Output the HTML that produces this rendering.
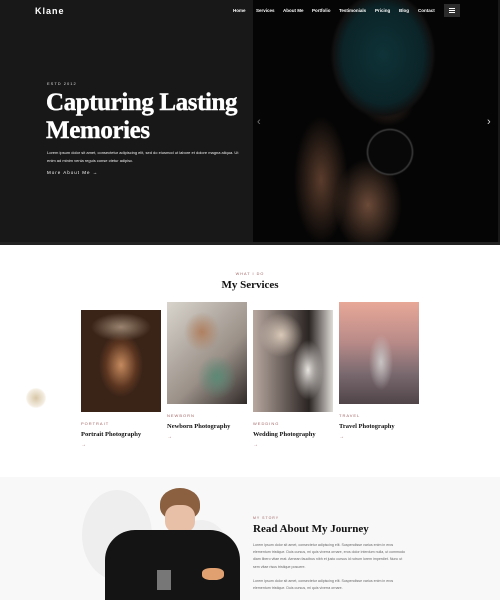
<!DOCTYPE html>
<html><head><meta charset="utf-8"><style>
*{margin:0;padding:0;box-sizing:border-box}
body{width:500px;height:600px;overflow:hidden;font-family:"Liberation Sans",sans-serif;background:#fff;position:relative}
.a{position:absolute}
.hero{left:0;top:0;width:500px;height:245px;background:#181818}
.photo{left:253px;top:0;width:245px;height:242px;background:radial-gradient(circle 28px at 137px 152px,#080808 0 75%,#3a3a3a 80%,transparent 86%),radial-gradient(ellipse 62px 75px at 130px 55px,#0e3338 0%,#0b2428 65%,#101010 80%,transparent 85%),radial-gradient(ellipse 32px 75px at 68px 180px,#5a3c2c,transparent 85%),radial-gradient(ellipse 40px 55px at 115px 205px,#6b4a38,transparent 85%),radial-gradient(ellipse 30px 25px at 135px 105px,#3a2a22,transparent 85%),#050505}
.nav{top:8px;font-size:4.5px;color:#fff;font-weight:bold}
.serif{font-family:"Liberation Serif",serif;font-weight:bold}
.card{width:80px}
.lbl{font-size:4px;letter-spacing:1px;color:#a06060}
.t{font-size:6.5px;color:#111}
.p{font-size:3.6px;color:#666;line-height:7.2px;width:155px}
</style></head><body>
<div class="a hero"></div>
<div class="a photo"></div>
<div class="a" style="left:0;top:242px;width:500px;height:3px;background:#222"></div>
<div class="a" style="left:35px;top:6px;color:#fff;font-weight:bold;font-size:9px;letter-spacing:1px">Klane</div>
<div class="a nav" style="left:233px">Home</div>
<div class="a nav" style="left:256px">Services</div>
<div class="a nav" style="left:283px">About Me</div>
<div class="a nav" style="left:312px">Portfolio</div>
<div class="a nav" style="left:339px">Testimonials</div>
<div class="a nav" style="left:375px">Pricing</div>
<div class="a nav" style="left:399px">Blog</div>
<div class="a nav" style="left:418px">Contact</div>
<div class="a" style="left:444px;top:4px;width:16px;height:13px;background:#2c2c2c"></div>
<div class="a" style="left:449px;top:8px;width:6px;height:1px;background:#fff;box-shadow:0 2px #fff,0 4px #fff"></div>
<div class="a" style="left:47px;top:81px;color:#ddd;font-size:4px;letter-spacing:1px">ESTD 2012</div>
<div class="a serif" style="left:46px;top:89px;color:#fff;font-size:25px;line-height:28px;letter-spacing:-0.4px;-webkit-text-stroke:0.4px #fff">Capturing Lasting<br>Memories</div>
<div class="a" style="left:47px;top:149px;color:#eee;font-size:4px;line-height:7.5px;width:195px">Lorem ipsum dolor sit amet, consectetur adipiscing elit, sed do eiusmod ut labore et dolore magna aliqua. Ut enim ad minim venia reguis conse ctetur adipisc.</div>
<div class="a" style="left:47px;top:170px;color:#fff;font-size:4.5px;letter-spacing:1px">More About Me →</div>
<div class="a" style="left:257px;top:116px;color:#777;font-size:11px">‹</div>
<div class="a" style="left:487px;top:116px;color:#ddd;font-size:11px">›</div>
<div class="a" style="left:0;top:272px;width:500px;text-align:center;font-size:3.8px;letter-spacing:1px;color:#a06060">WHAT I DO</div>
<div class="a serif" style="left:0;top:279px;width:500px;text-align:center;font-size:11px;color:#111">My Services</div>
<div class="a" style="left:26px;top:388px;width:20px;height:20px;border-radius:50%;background:radial-gradient(circle,#d8c7a8,#f3ece0 60%,#fff 75%)"></div>
<div class="a card" style="left:81px;top:310px;height:102px;background:radial-gradient(ellipse 30px 14px at 40px 17px,#9a8470,transparent),radial-gradient(ellipse 22px 32px at 40px 55px,#c58a5e,#5b3520 70%,#3a2418)"></div>
<div class="a card" style="left:167px;top:302px;height:102px;background:radial-gradient(ellipse 20px 22px at 50px 75px,#5c8a76,transparent),radial-gradient(ellipse 18px 20px at 35px 30px,#b08060,transparent),linear-gradient(135deg,#d8d4cc,#9a9088 60%,#302a28)"></div>
<div class="a card" style="left:253px;top:310px;height:102px;background:radial-gradient(ellipse 15px 30px at 55px 60px,#e8e4e0,transparent),radial-gradient(ellipse 22px 22px at 28px 25px,#d8c8b8,transparent),linear-gradient(90deg,#b8a8a0,#2a2422 70%,#e0dcd8)"></div>
<div class="a card" style="left:339px;top:302px;height:102px;background:radial-gradient(ellipse 12px 28px at 42px 60px,#c8c4c4,transparent),linear-gradient(180deg,#e8a898,#b88a88 40%,#7a6a70 70%,#504448)"></div>
<div class="a lbl" style="left:81px;top:421px">PORTRAIT</div>
<div class="a serif t" style="left:81px;top:431px">Portrait Photography</div>
<div class="a" style="left:81px;top:442px;font-size:5px;color:#a06060">→</div>
<div class="a lbl" style="left:167px;top:413px">NEWBORN</div>
<div class="a serif t" style="left:167px;top:423px">Newborn Photography</div>
<div class="a" style="left:167px;top:434px;font-size:5px;color:#a06060">→</div>
<div class="a lbl" style="left:253px;top:421px">WEDDING</div>
<div class="a serif t" style="left:253px;top:431px">Wedding Photography</div>
<div class="a" style="left:253px;top:442px;font-size:5px;color:#a06060">→</div>
<div class="a lbl" style="left:339px;top:413px">TRAVEL</div>
<div class="a serif t" style="left:339px;top:423px">Travel Photography</div>
<div class="a" style="left:339px;top:434px;font-size:5px;color:#a06060">→</div>
<div class="a" style="left:0;top:477px;width:500px;height:123px;background:#f8f8f8"></div>
<div class="a" style="left:82px;top:490px;width:70px;height:90px;border-radius:50%;background:#eeeeee"></div>
<div class="a" style="left:170px;top:520px;width:62px;height:80px;border-radius:50%;background:#efefef"></div>
<div class="a" style="left:160px;top:488px;width:40px;height:32px;border-radius:50% 50% 40% 40%;background:#8a6040"></div>
<div class="a" style="left:165px;top:505px;width:30px;height:28px;border-radius:40%;background:#e8c0a8"></div>
<div class="a" style="left:105px;top:530px;width:135px;height:70px;border-radius:30px 30px 0 0;background:#141414"></div>
<div class="a" style="left:157px;top:570px;width:14px;height:20px;background:#777"></div>
<div class="a" style="left:202px;top:568px;width:22px;height:12px;border-radius:40%;background:#e0a070"></div>
<div class="a lbl" style="left:253px;top:516px;font-size:3.5px">MY STORY</div>
<div class="a serif" style="left:253px;top:523px;font-size:11px;color:#111">Read About My Journey</div>
<div class="a p" style="left:253px;top:542px">Lorem ipsum dolor sit amet, consectetur adipiscing elit. Suspendisse varius enim in eros elementum tristique. Duis cursus, mi quis viverra ornare, eros dolor interdum nulla, ut commodo diam libero vitae erat. Aenean faucibus nibh et justo cursus id rutrum lorem imperdiet. Nunc ut sem vitae risus tristique posuere.</div>
<div class="a p" style="left:253px;top:578px">Lorem ipsum dolor sit amet, consectetur adipiscing elit. Suspendisse varius enim in eros elementum tristique. Duis cursus, mi quis viverra ornare.</div>
</body></html>
